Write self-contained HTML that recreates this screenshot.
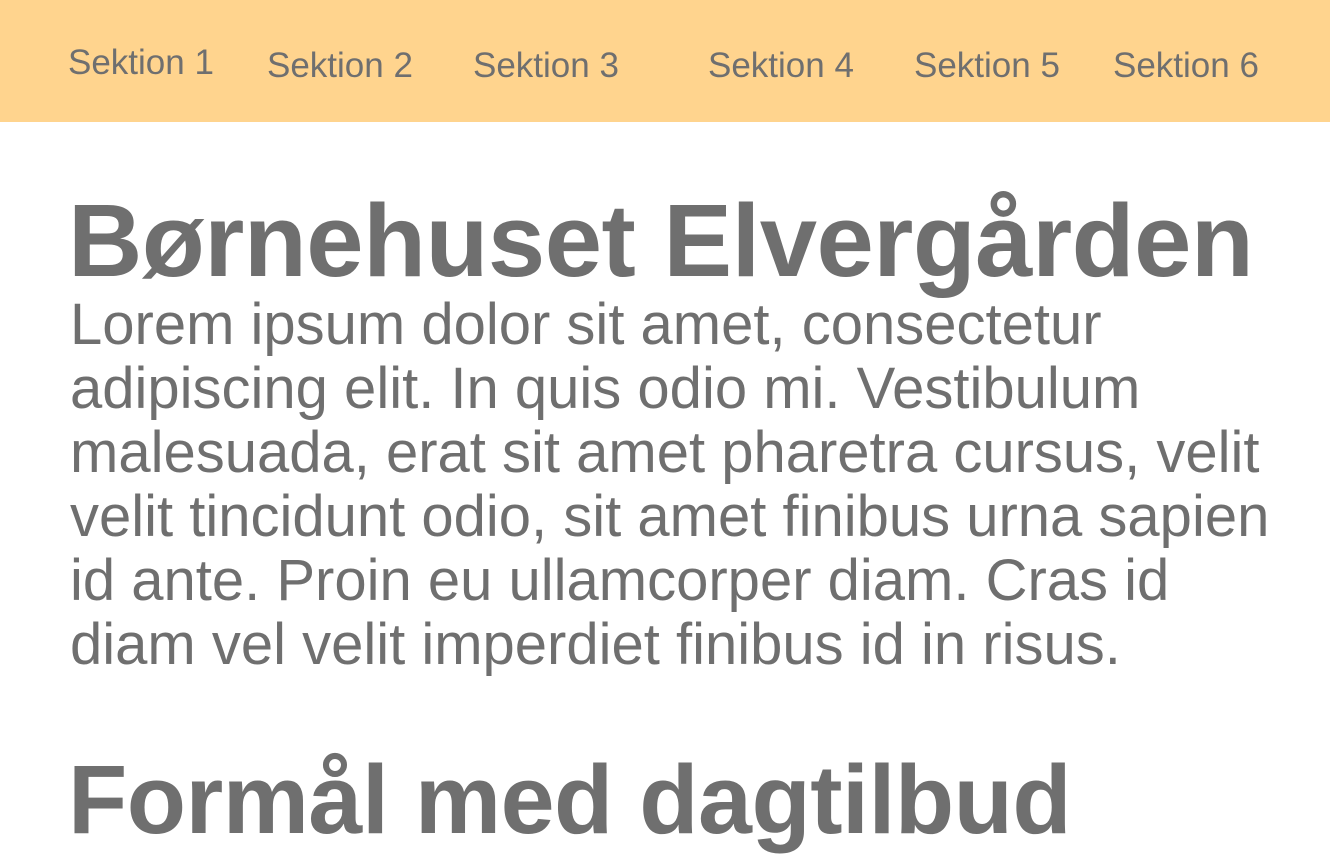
<!DOCTYPE html>
<html><head><meta charset="utf-8"><style>
body{margin:0;width:1330px;height:854px;overflow:hidden;background:#fff;font-family:"Liberation Sans",Arial,sans-serif;color:#6f6f6f;position:relative}
.nav{position:absolute;left:0;top:0;width:1330px;height:122px;background:#ffd48e}
.nav span{position:absolute;font-size:35px;line-height:1;white-space:nowrap}
.h{position:absolute;left:68px;font-weight:bold;line-height:1;white-space:nowrap;letter-spacing:-0.5px}
.p{position:absolute;left:70px;top:293px;font-size:58px;line-height:64px;width:1260px;white-space:nowrap}
</style></head><body>
<div class="nav">
<span style="left:68px;top:45px">Sektion 1</span>
<span style="left:267px;top:48px">Sektion 2</span>
<span style="left:473px;top:48px">Sektion 3</span>
<span style="left:708px;top:48px">Sektion 4</span>
<span style="left:914px;top:48px">Sektion 5</span>
<span style="left:1113px;top:48px">Sektion 6</span>
</div>
<div class="h" style="top:189px;font-size:103px">Børnehuset Elvergården</div>
<div class="p">Lorem ipsum dolor sit amet, consectetur<br>adipiscing elit. In quis odio mi. Vestibulum<br>malesuada, erat sit amet pharetra cursus, velit<br>velit tincidunt odio, sit amet finibus urna sapien<br>id ante. Proin eu ullamcorper diam. Cras id<br>diam vel velit imperdiet finibus id in risus.</div>
<div class="h" style="top:751px;font-size:97px">Formål med dagtilbud</div>
</body></html>
